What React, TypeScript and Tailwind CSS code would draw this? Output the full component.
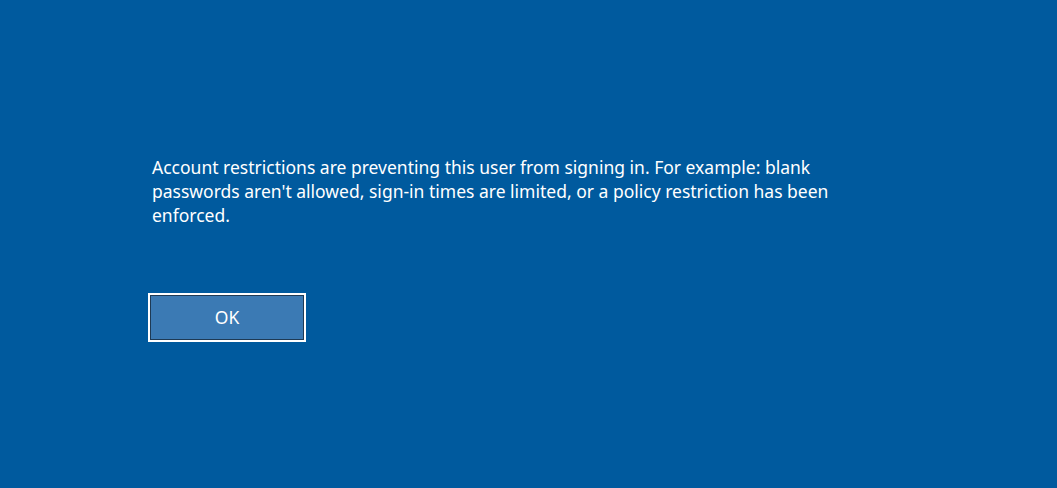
export default function App() {
  return (
    <div className="min-h-[488px] w-full bg-[#005a9e] pl-[152px] pt-[155px] text-white" style={{ fontFamily: '"Noto Sans", "Open Sans", sans-serif' }}>
      <p className="text-[17.5px] leading-[24px]">
        Account restrictions are preventing this user from signing in. For example: blank
        <br />
        passwords aren't allowed, sign-in times are limited, or a policy restriction has been
        <br />
        enforced.
      </p>
      <button className="-ml-[4px] mt-[66px] flex h-[49px] w-[158px] items-center justify-center border-2 border-white bg-[#3b7ab4] text-[17.5px] text-white outline outline-1 -outline-offset-3 outline-[#1e3a55]">
        OK
      </button>
    </div>
  );
}
